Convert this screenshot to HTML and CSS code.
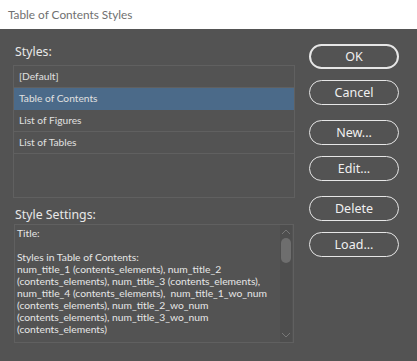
FILE: index.html
```html
<!DOCTYPE html>
<html>
<head>
<meta charset="utf-8">
<link rel="stylesheet" href="styles.css">
</head>
<body>
<div class="dialog">
  <div class="titlebar">Table of Contents Styles</div>
  <div class="main">
    <div class="left">
      <div class="label">Styles:</div>
      <div class="list">
        <div class="row">[Default]</div>
        <div class="row selected">Table of Contents</div>
        <div class="row">List of Figures</div>
        <div class="row">List of Tables</div>
      </div>
      <div class="label label-settings">Style Settings:</div>
      <div class="settings">
        <div class="settings-text">Title:

Styles in Table of Contents:
num_title_1 (contents_elements), num_title_2
(contents_elements), num_title_3 (contents_elements),
num_title_4 (contents_elements),  num_title_1_wo_num
(contents_elements), num_title_2_wo_num
(contents_elements), num_title_3_wo_num
(contents_elements)</div>
        <div class="scrollbar">
          <svg class="arrow up" width="10" height="6" viewBox="0 0 10 6"><path d="M1 5 L5 1 L9 5" fill="none" stroke="#777" stroke-width="1"/></svg>
          <div class="thumb"></div>
          <div class="track-fill"></div>
          <svg class="arrow down" width="10" height="6" viewBox="0 0 10 6"><path d="M1 1 L5 5 L9 1" fill="none" stroke="#777" stroke-width="1"/></svg>
        </div>
      </div>
    </div>
    <div class="buttons">
      <button class="btn primary">OK</button>
      <button class="btn gap-s">Cancel</button>
      <button class="btn gap-l">New...</button>
      <button class="btn gap-s">Edit...</button>
      <button class="btn gap-l">Delete</button>
      <button class="btn gap-s">Load...</button>
    </div>
  </div>
</div>
</body>
</html>
```

FILE: styles.css
```css
html, body {
  margin: 0;
  padding: 0;
  background: #535353;
}
.dialog {
  width: 417px;
  height: 361px;
  background: #535353;
  font-family: "Noto Sans", "Open Sans", sans-serif;
  overflow: hidden;
}
.titlebar {
  height: 29px;
  background: #ffffff;
  color: #707070;
  font-family: Lato, "Noto Sans", sans-serif;
  font-size: 11.8px;
  line-height: 29px;
  padding-left: 8px;
  box-sizing: border-box;
}
.main {
  display: flex;
  padding-top: 14px;
}
.left {
  width: 282px;
  margin-left: 13px;
}
.label {
  color: #e8e8e8;
  font-size: 12.3px;
  line-height: 18px;
  height: 18px;
  padding-left: 2px;
  margin-bottom: 4px;
}
.label-settings {
  margin-top: 8px;
  margin-bottom: 0;
}
.list {
  height: 133px;
  border: 1px solid #606060;
  box-sizing: border-box;
}
.row {
  height: 22px;
  border-bottom: 1px solid #606060;
  box-sizing: border-box;
  color: #e0e0e0;
  font-family: Lato, "Noto Sans", sans-serif;
  font-size: 10.2px;
  line-height: 21px;
  padding-left: 5px;
}
.row.selected {
  background: #4b6a89;
  border-bottom-color: #4b6a89;
}
.settings {
  margin-left: 1px;
  width: 280px;
  height: 119px;
  border: 1px solid #606060;
  box-sizing: border-box;
  display: flex;
}
.settings-text {
  flex: 1;
  white-space: pre;
  color: #e6e6e6;
  font-family: Lato, "Noto Sans", sans-serif;
  font-size: 10.3px;
  line-height: 12px;
  padding: 2px 0 0 2px;
  overflow: hidden;
}
.scrollbar {
  width: 12px;
  margin-right: 1px;
  display: flex;
  flex-direction: column;
  align-items: center;
  background: #4e4e4e;
}
.arrow {
  display: block;
  flex: none;
}
.arrow.up {
  margin-top: 4px;
}
.arrow.down {
  margin-bottom: 4px;
}
.thumb {
  width: 10px;
  height: 25px;
  margin-top: 3px;
  border-radius: 5px;
  background: #6e6e6e;
}
.track-fill {
  flex: 1;
}
.buttons {
  margin-left: 14px;
  padding-top: 1px;
  display: flex;
  flex-direction: column;
  width: 90px;
}
.btn {
  width: 90px;
  height: 25px;
  border: 1px solid #e6e6e6;
  border-radius: 13px;
  background: transparent;
  color: #f0f0f0;
  font-family: "Noto Sans", "Open Sans", sans-serif;
  font-size: 12.5px;
  padding: 0;
  box-sizing: border-box;
  line-height: 22px;
}
.btn.primary {
  border-width: 2px;
}
.gap-s {
  margin-top: 11px;
}
.gap-l {
  margin-top: 15px;
}
```
